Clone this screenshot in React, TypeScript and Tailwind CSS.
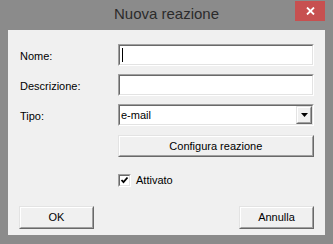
import React from "react";

const font = { fontFamily: '"Liberation Sans", Arial, sans-serif' };

function Sunken({ children, className = "" }: { children?: React.ReactNode; className?: string }) {
  return (
    <div className={"border border-t-[#a0a0a0] border-l-[#a0a0a0] border-b-[#ffffff] border-r-[#ffffff] " + className}>
      <div className="h-full w-full border border-t-[#696969] border-l-[#696969] border-b-[#e3e3e3] border-r-[#e3e3e3] bg-white">
        {children}
      </div>
    </div>
  );
}

function Raised({ children, className = "" }: { children?: React.ReactNode; className?: string }) {
  return (
    <div className={"border border-t-[#e3e3e3] border-l-[#e3e3e3] border-b-[#696969] border-r-[#696969] " + className}>
      <div className="flex h-full w-full items-center justify-center border border-t-white border-l-white border-b-[#a0a0a0] border-r-[#a0a0a0] bg-[#f0f0f0]">
        {children}
      </div>
    </div>
  );
}

function Label({ children }: { children: React.ReactNode }) {
  return <div className="w-[98px] pt-[3px] text-[11px] text-black">{children}</div>;
}

export default function App() {
  return (
    <div className="flex h-[244px] w-[333px] flex-col bg-[#8b8b8b]" style={font}>
      <div className="relative flex h-[30px] shrink-0 items-center justify-center">
        <span className="pb-[1px] text-[15px] text-[#2b2b2b]">Nuova reazione</span>
        <div className="absolute right-[8px] top-[1px] flex h-[20px] w-[30px] items-center justify-center bg-[#c75050]">
          <svg width="9" height="8" viewBox="0 0 9 8">
            <path d="M1 0.5 L8 7.5 M8 0.5 L1 7.5" stroke="white" strokeWidth="1.8" />
          </svg>
        </div>
      </div>
      <div className="mx-[8px] mb-[9px] flex flex-1 flex-col bg-[#f0f0f0] pl-[12px] pr-[11px] pt-[14px]">
        <div className="flex h-[22px] items-center">
          <Label>Nome:</Label>
          <Sunken className="h-[22px] w-[196px]">
            <div className="ml-[2px] mt-[2px] h-[14px] w-[1px] bg-black" />
          </Sunken>
        </div>
        <div className="mt-[8px] flex h-[22px] items-center">
          <Label>Descrizione:</Label>
          <Sunken className="h-[22px] w-[196px]" />
        </div>
        <div className="mt-[8px] flex h-[22px] items-center">
          <Label>Tipo:</Label>
          <Sunken className="h-[22px] w-[196px]">
            <div className="flex h-full items-center justify-between pl-[1px] pr-[0px]">
              <span className="text-[11px] text-black">e-mail</span>
              <Raised className="h-[18px] w-[16px]">
                <svg width="7" height="4" viewBox="0 0 7 4">
                  <path d="M0 0 H7 L3.5 4 Z" fill="black" />
                </svg>
              </Raised>
            </div>
          </Sunken>
        </div>
        <div className="mt-[9px] flex">
          <div className="w-[98px]" />
          <Raised className="h-[22px] w-[197px]">
            <span className="text-[11px] text-black">Configura reazione</span>
          </Raised>
        </div>
        <div className="mt-[15px] flex items-center">
          <div className="w-[98px]" />
          <Sunken className="h-[13px] w-[13px]">
            <svg width="9" height="9" viewBox="0 0 9 9" className="block">
              <path d="M1.5 4 L3.5 6.2 L7.5 1.5" stroke="black" strokeWidth="1.8" fill="none" />
            </svg>
          </Sunken>
          <span className="ml-[5px] text-[11px] text-black">Attivato</span>
        </div>
        <div className="mt-[17px] flex justify-between">
          <Raised className="ml-[-1px] h-[23px] w-[75px]">
            <span className="text-[11px] text-black">OK</span>
          </Raised>
          <Raised className="h-[23px] w-[75px]">
            <span className="text-[11px] text-black">Annulla</span>
          </Raised>
        </div>
      </div>
    </div>
  );
}
